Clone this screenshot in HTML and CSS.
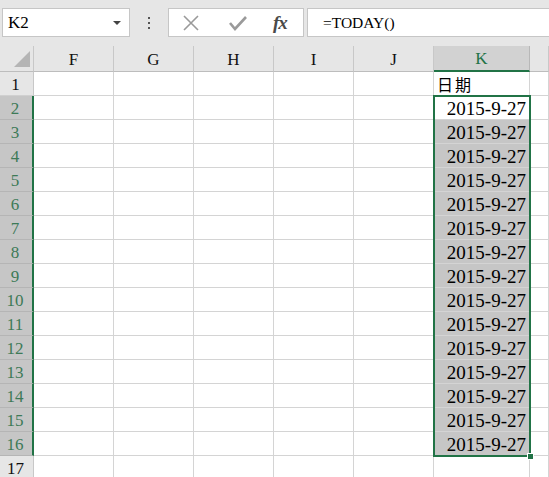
FILE: index.html
```html
<!DOCTYPE html>
<html>
<head>
<meta charset="utf-8">
<link rel="stylesheet" href="styles.css">
</head>
<body>
<div class="app">
  <div class="topbar">
    <div class="namebox">
      <span class="name">K2</span>
      <span class="caret"></span>
    </div>
    <div class="dots"><i></i><i></i><i></i></div>
    <div class="btnbox">
      <svg class="ico" width="20" height="20" viewBox="0 0 20 20"><path d="M3 3 L17 17 M17 3 L3 17" stroke="#9a9a9a" stroke-width="1.6" fill="none"/></svg>
      <svg class="ico" width="22" height="20" viewBox="0 0 22 20"><path d="M3 10 L8 16 L19 4" stroke="#9a9a9a" stroke-width="2.6" fill="none"/></svg>
      <span class="fx">fx</span>
    </div>
    <div class="formula">=TODAY()</div>
  </div>
  <div class="sheet">
    <div class="hd corner"><span class="tri"></span></div>
    <div class="hd col">F</div>
    <div class="hd col">G</div>
    <div class="hd col">H</div>
    <div class="hd col">I</div>
    <div class="hd col">J</div>
    <div class="hd col sel">K</div>
    <div class="hd col"></div>

    <div class="hd row">1</div><div class="c"></div><div class="c"></div><div class="c"></div><div class="c"></div><div class="c"></div><div class="c txt">日期</div><div class="c"></div>
    <div class="hd row rs">2</div><div class="c"></div><div class="c"></div><div class="c"></div><div class="c"></div><div class="c"></div><div class="c num act">2015-9-27</div><div class="c"></div>
    <div class="hd row rs">3</div><div class="c"></div><div class="c"></div><div class="c"></div><div class="c"></div><div class="c"></div><div class="c num hl">2015-9-27</div><div class="c"></div>
    <div class="hd row rs">4</div><div class="c"></div><div class="c"></div><div class="c"></div><div class="c"></div><div class="c"></div><div class="c num hl">2015-9-27</div><div class="c"></div>
    <div class="hd row rs">5</div><div class="c"></div><div class="c"></div><div class="c"></div><div class="c"></div><div class="c"></div><div class="c num hl">2015-9-27</div><div class="c"></div>
    <div class="hd row rs">6</div><div class="c"></div><div class="c"></div><div class="c"></div><div class="c"></div><div class="c"></div><div class="c num hl">2015-9-27</div><div class="c"></div>
    <div class="hd row rs">7</div><div class="c"></div><div class="c"></div><div class="c"></div><div class="c"></div><div class="c"></div><div class="c num hl">2015-9-27</div><div class="c"></div>
    <div class="hd row rs">8</div><div class="c"></div><div class="c"></div><div class="c"></div><div class="c"></div><div class="c"></div><div class="c num hl">2015-9-27</div><div class="c"></div>
    <div class="hd row rs">9</div><div class="c"></div><div class="c"></div><div class="c"></div><div class="c"></div><div class="c"></div><div class="c num hl">2015-9-27</div><div class="c"></div>
    <div class="hd row rs">10</div><div class="c"></div><div class="c"></div><div class="c"></div><div class="c"></div><div class="c"></div><div class="c num hl">2015-9-27</div><div class="c"></div>
    <div class="hd row rs">11</div><div class="c"></div><div class="c"></div><div class="c"></div><div class="c"></div><div class="c"></div><div class="c num hl">2015-9-27</div><div class="c"></div>
    <div class="hd row rs">12</div><div class="c"></div><div class="c"></div><div class="c"></div><div class="c"></div><div class="c"></div><div class="c num hl">2015-9-27</div><div class="c"></div>
    <div class="hd row rs">13</div><div class="c"></div><div class="c"></div><div class="c"></div><div class="c"></div><div class="c"></div><div class="c num hl">2015-9-27</div><div class="c"></div>
    <div class="hd row rs">14</div><div class="c"></div><div class="c"></div><div class="c"></div><div class="c"></div><div class="c"></div><div class="c num hl">2015-9-27</div><div class="c"></div>
    <div class="hd row rs">15</div><div class="c"></div><div class="c"></div><div class="c"></div><div class="c"></div><div class="c"></div><div class="c num hl">2015-9-27</div><div class="c"></div>
    <div class="hd row rs">16</div><div class="c"></div><div class="c"></div><div class="c"></div><div class="c"></div><div class="c"></div><div class="c num hl">2015-9-27</div><div class="c"></div>
    <div class="hd row">17</div><div class="c"></div><div class="c"></div><div class="c"></div><div class="c"></div><div class="c"></div><div class="c"></div><div class="c"></div>

    <div class="selbox"><span class="handle"></span></div>
  </div>
</div>
</body>
</html>
```
FILE: styles.css
```css
* { box-sizing: border-box; }
html, body { margin: 0; padding: 0; }
body {
  width: 549px;
  height: 477px;
  overflow: hidden;
  background: #ffffff;
  font-family: "Liberation Serif", "Noto Sans CJK SC", serif;
  color: #000;
}
.app { width: 549px; height: 477px; overflow: hidden; }

.topbar {
  height: 46px;
  background: #e6e6e6;
  display: flex;
  align-items: flex-start;
  padding-top: 8px;
  padding-left: 2px;
}
.namebox {
  width: 128px;
  height: 29px;
  background: #fff;
  border: 1px solid #c6c6c6;
  display: flex;
  align-items: center;
  justify-content: space-between;
  padding: 0 8px 0 5px;
}
.name { font-size: 17px; line-height: 1; }
.caret {
  width: 0; height: 0;
  border-left: 4px solid transparent;
  border-right: 4px solid transparent;
  border-top: 4px solid #444;
}
.dots {
  width: 38px;
  height: 29px;
  display: flex;
  flex-direction: column;
  align-items: center;
  justify-content: center;
  gap: 3px;
}
.dots i { display: block; width: 2px; height: 2px; background: #555; }
.btnbox {
  width: 136px;
  height: 29px;
  background: #fff;
  border: 1px solid #c6c6c6;
  display: flex;
  align-items: center;
  padding-left: 12px;
  gap: 26px;
}
.ico { display: block; }
.fx {
  font-family: "Liberation Serif", serif;
  font-style: italic;
  font-weight: bold;
  font-size: 19px;
  color: #4a4a4a;
  margin-left: -2px;
  letter-spacing: -1px;
}
.formula {
  flex: 1;
  height: 29px;
  margin-left: 3px;
  background: #fff;
  border: 1px solid #c6c6c6;
  border-right: none;
  display: flex;
  align-items: center;
  padding-left: 15px;
  font-size: 15.5px;
}

.sheet {
  position: relative;
  display: grid;
  grid-template-columns: 34px 80px 80px 80px 80px 80px 96px 1fr;
  grid-template-rows: 26px repeat(17, 24px);
}
.hd {
  background: #e6e6e6;
  display: flex;
  align-items: center;
  justify-content: center;
  font-size: 17px;
  color: #111;
}
.col { border-right: 1px solid #c8c8c8; border-bottom: 1px solid #bdbdbd; padding-top: 2px; }
.col.sel {
  background: #d2d2d2;
  color: #217346;
  border-bottom: 2px solid #217346;
  border-right: 1px solid #b8b8b8;
}
.corner {
  position: relative;
  border-right: 1px solid #c8c8c8;
  border-bottom: 1px solid #bdbdbd;
}
.tri {
  position: absolute;
  right: 3px;
  bottom: 4px;
  width: 0; height: 0;
  border-left: 16px solid transparent;
  border-bottom: 16px solid #b5b5b5;
}
.row {
  border-right: 1px solid #c8c8c8;
  border-bottom: 1px solid #d0d0d0;
  font-size: 17px;
  padding-top: 2px;
  padding-right: 2px;
}
.row.rs {
  background: #c6c6c6;
  color: #3d7a57;
  border-right: 2px solid #217346;
  border-bottom: 1px solid #b5b5b5;
}
.c {
  border-right: 1px solid #d4d4d4;
  border-bottom: 1px solid #d4d4d4;
  display: flex;
  align-items: center;
  font-size: 19px;
  overflow: hidden;
  white-space: nowrap;
}
.c.txt {
  font-family: "Noto Sans CJK SC", sans-serif;
  font-size: 16px;
  padding-left: 3px;
  letter-spacing: 2px;
}
.c.num { justify-content: flex-end; padding-right: 3px; padding-top: 2px; }
.c.hl { background: #c6c6c6; }
.selbox {
  position: absolute;
  left: 433px;
  top: 49px;
  width: 98px;
  height: 362px;
  border: 2px solid #217346;
  pointer-events: none;
}
.handle {
  position: absolute;
  right: -5px;
  bottom: -5px;
  width: 7px;
  height: 7px;
  background: #217346;
  border: 1px solid #fff;
}
```
